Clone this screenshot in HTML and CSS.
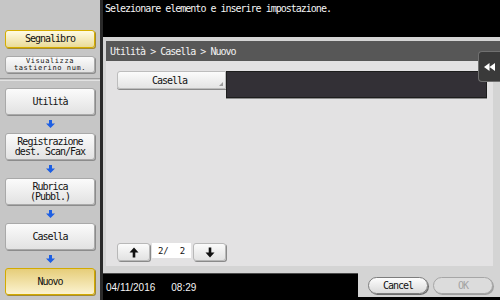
FILE: index.html
```html
<!DOCTYPE html>
<html lang="it">
<head>
<meta charset="utf-8">
<title>Casella</title>
<link rel="stylesheet" href="styles.css">
</head>
<body>
<aside class="sidebar">
  <div class="sb-btn sb-yellow sb-short">Segnalibro</div>
  <div class="sb-btn sb-tiny"><span class="tiny-line">Visualizza</span><span class="tiny-line">tastierino num.</span></div>
  <div class="divider"></div>
  <nav class="nav">
    <div class="sb-btn nav-btn">Utilità</div>
    <div class="down"><svg width="9" height="8" viewBox="0 0 9 8"><path d="M3 0h3v3.5h3L4.5 8 0 3.5h3z" fill="#1d5fe3"/></svg></div>
    <div class="sb-btn nav-btn">Registrazione<br>dest. Scan/Fax</div>
    <div class="down"><svg width="9" height="8" viewBox="0 0 9 8"><path d="M3 0h3v3.5h3L4.5 8 0 3.5h3z" fill="#1d5fe3"/></svg></div>
    <div class="sb-btn nav-btn">Rubrica<br>(Pubbl.)</div>
    <div class="down"><svg width="9" height="8" viewBox="0 0 9 8"><path d="M3 0h3v3.5h3L4.5 8 0 3.5h3z" fill="#1d5fe3"/></svg></div>
    <div class="sb-btn nav-btn">Casella</div>
    <div class="down"><svg width="9" height="8" viewBox="0 0 9 8"><path d="M3 0h3v3.5h3L4.5 8 0 3.5h3z" fill="#1d5fe3"/></svg></div>
    <div class="sb-btn nav-btn nav-yellow">Nuovo</div>
  </nav>
</aside>
<main class="main">
  <div class="topbar">Selezionare elemento e inserire impostazione.</div>
  <section class="dialog">
    <div class="dlg-head">Utilità &gt; Casella &gt; Nuovo</div>
    <div class="panel">
      <div class="field-row">
        <div class="casella-btn">Casella<span class="corner"></span></div>
        <div class="field"></div>
      </div>
      <div class="pager">
        <div class="pg-btn"><svg width="10" height="11" viewBox="0 0 10 11"><path d="M5 0.5L9.5 5.5H6.3V10.5H3.7V5.5H0.5z" fill="#111"/></svg></div>
        <div class="pg-box">2/&nbsp;&nbsp;2</div>
        <div class="pg-btn"><svg width="10" height="11" viewBox="0 0 10 11"><path d="M5 10.5L9.5 5.5H6.3V0.5H3.7V5.5H0.5z" fill="#111"/></svg></div>
      </div>
    </div>
    <div class="tab"><svg width="11" height="8" viewBox="0 0 11 8"><path d="M5.5 0V8L0 4zM11 0V8L5.5 4z" fill="#fff"/></svg></div>
  </section>
  <div class="bottom">
    <div class="footer"><span>04/11/2016</span><span>08:29</span></div>
    <div class="actions">
      <div class="pill">Cancel</div>
      <div class="pill pill-off">OK</div>
    </div>
  </div>
</main>
</body>
</html>
```
FILE: styles.css
```css
html, body {
  margin: 0;
  padding: 0;
}
body {
  width: 500px;
  height: 300px;
  overflow: hidden;
  display: flex;
  background: #000;
  font-family: "DejaVu Sans Mono", "Liberation Mono", monospace;
  font-size: 10px;
  letter-spacing: -1px;
  color: #111;
}

/* ---------- sidebar ---------- */
.sidebar {
  width: 103px;
  height: 300px;
  box-sizing: border-box;
  flex: none;
  background: #c6c6c6;
  border-right: 3px solid #2a2a2a;
  padding: 30px 5px 0 5px;
  display: flex;
  flex-direction: column;
}
.sb-btn {
  box-sizing: border-box;
  width: 90px;
  display: flex;
  align-items: center;
  justify-content: center;
  text-align: center;
  border: 1px solid #a9a9a9;
  border-radius: 3px;
  background: linear-gradient(#fbfbfb, #e2e2e2);
  box-shadow: 1px 1px 0 #8c8c8c;
  line-height: 10px;
}
.sb-short {
  height: 18px;
}
.sb-yellow {
  border-color: #d6ae00;
  background: linear-gradient(#fffbe4, #eadb98);
  box-shadow: 1px 1px 0 #a48a30;
}
.sb-tiny {
  height: 17px;
  margin-top: 8px;
  flex-direction: column;
  font-size: 7px;
  line-height: 7px;
  letter-spacing: 0.6px;
}
.tiny-line {
  display: block;
  height: 7px;
}
.divider {
  margin-top: 5px;
  height: 1px;
  border-top: 1px solid #9a9a9a;
  border-bottom: 1px solid #e2e2e2;
  margin-left: -5px;
  margin-right: -5px;
}
.nav {
  margin-top: 7px;
  display: flex;
  flex-direction: column;
}
.nav-btn {
  height: 27px;
}
.nav-yellow {
  border-color: #d2aa00;
  background: linear-gradient(#e6cd79, #fbf3d0);
  box-shadow: 1px 1px 0 #a48a30;
}
.down {
  height: 18px;
  display: flex;
  align-items: center;
  justify-content: center;
}
.down svg {
  display: block;
}

/* ---------- main ---------- */
.main {
  flex: 1;
  display: flex;
  flex-direction: column;
  background: #000;
}
.topbar {
  height: 37px;
  box-sizing: border-box;
  padding: 3px 2px;
  color: #f4f4f4;
  line-height: 11px;
}
.dialog {
  position: relative;
  height: 236px;
  box-sizing: border-box;
  background: #d4d4d4;
  padding: 4px 0 0 3px;
  display: flex;
  flex-direction: column;
}
.dlg-head {
  height: 20px;
  background: #575757;
  color: #f2f2f2;
  padding-left: 4px;
  display: flex;
  align-items: center;
}
.panel {
  width: 387px;
  height: 205px;
  box-sizing: border-box;
  background: #e3e2e3;
  padding: 10px 0 5px 11px;
  display: flex;
  flex-direction: column;
  justify-content: space-between;
}
.field-row {
  display: flex;
  align-items: flex-start;
}
.casella-btn {
  position: relative;
  box-sizing: border-box;
  width: 109px;
  height: 18px;
  display: flex;
  align-items: center;
  justify-content: center;
  border: 1px solid #bdbdbd;
  border-radius: 3px 0 0 3px;
  background: linear-gradient(#fbfbfb, #e4e4e4);
  box-shadow: 0 1px 0 #8a8a8a;
  padding-right: 4px;
}
.corner {
  position: absolute;
  right: 2px;
  bottom: 2px;
  width: 0;
  height: 0;
  border-left: 4px solid transparent;
  border-bottom: 4px solid #9a9a9a;
}
.field {
  width: 261px;
  height: 27px;
  box-sizing: border-box;
  background: #333036;
  border: 1px solid #1d1d1d;
  box-shadow: 0 1px 0 #8d8d8d;
}
.pager {
  display: flex;
  align-items: flex-start;
  gap: 2px;
}
.pg-btn {
  box-sizing: border-box;
  width: 33px;
  height: 18px;
  display: flex;
  align-items: center;
  justify-content: center;
  border: 1px solid #b8b8b8;
  border-radius: 3px;
  background: linear-gradient(#fbfbfb, #e2e2e2);
  box-shadow: 1px 1px 0 #8a8a8a;
}
.pg-btn svg {
  display: block;
}
.pg-box {
  width: 39px;
  height: 15px;
  background: #fff;
  display: flex;
  align-items: center;
  justify-content: center;
  font-size: 9px;
  letter-spacing: 0;
}
.tab {
  position: absolute;
  top: 14px;
  right: 0;
  width: 22px;
  height: 31px;
  box-sizing: border-box;
  background: #3a3a3a;
  border: 1px solid #707070;
  border-right: none;
  border-radius: 4px 0 0 4px;
  display: flex;
  align-items: flex-start;
  justify-content: center;
  padding-top: 11px;
}
.tab svg {
  display: block;
}

/* ---------- bottom ---------- */
.bottom {
  flex: 1;
  display: flex;
  align-items: flex-start;
}
.footer {
  width: 255px;
  height: 27px;
  box-sizing: border-box;
  border-top: 1px solid #4a4a4a;
  color: #f4f4f4;
  font-family: "Liberation Sans", Arial, sans-serif;
  font-size: 10px;
  letter-spacing: 0;
  padding: 8px 0 0 3px;
  display: flex;
  gap: 16px;
}
.actions {
  flex: 1;
  height: 24px;
  box-sizing: border-box;
  background: #d4d4d4;
  padding: 4px 0 0 10px;
  display: flex;
  gap: 5px;
}
.pill {
  box-sizing: border-box;
  width: 60px;
  height: 17px;
  border-radius: 9px;
  border: 1px solid #7d7d7d;
  background: linear-gradient(#fdfdfd, #dadada);
  box-shadow: 1px 1px 0 #6c6c6c;
  display: flex;
  align-items: center;
  justify-content: center;
}
.pill-off {
  border-color: #a6a6a6;
  background: #dcdcdc;
  box-shadow: 1px 1px 0 #a0a0a0;
  color: #a3a3a3;
}
```
